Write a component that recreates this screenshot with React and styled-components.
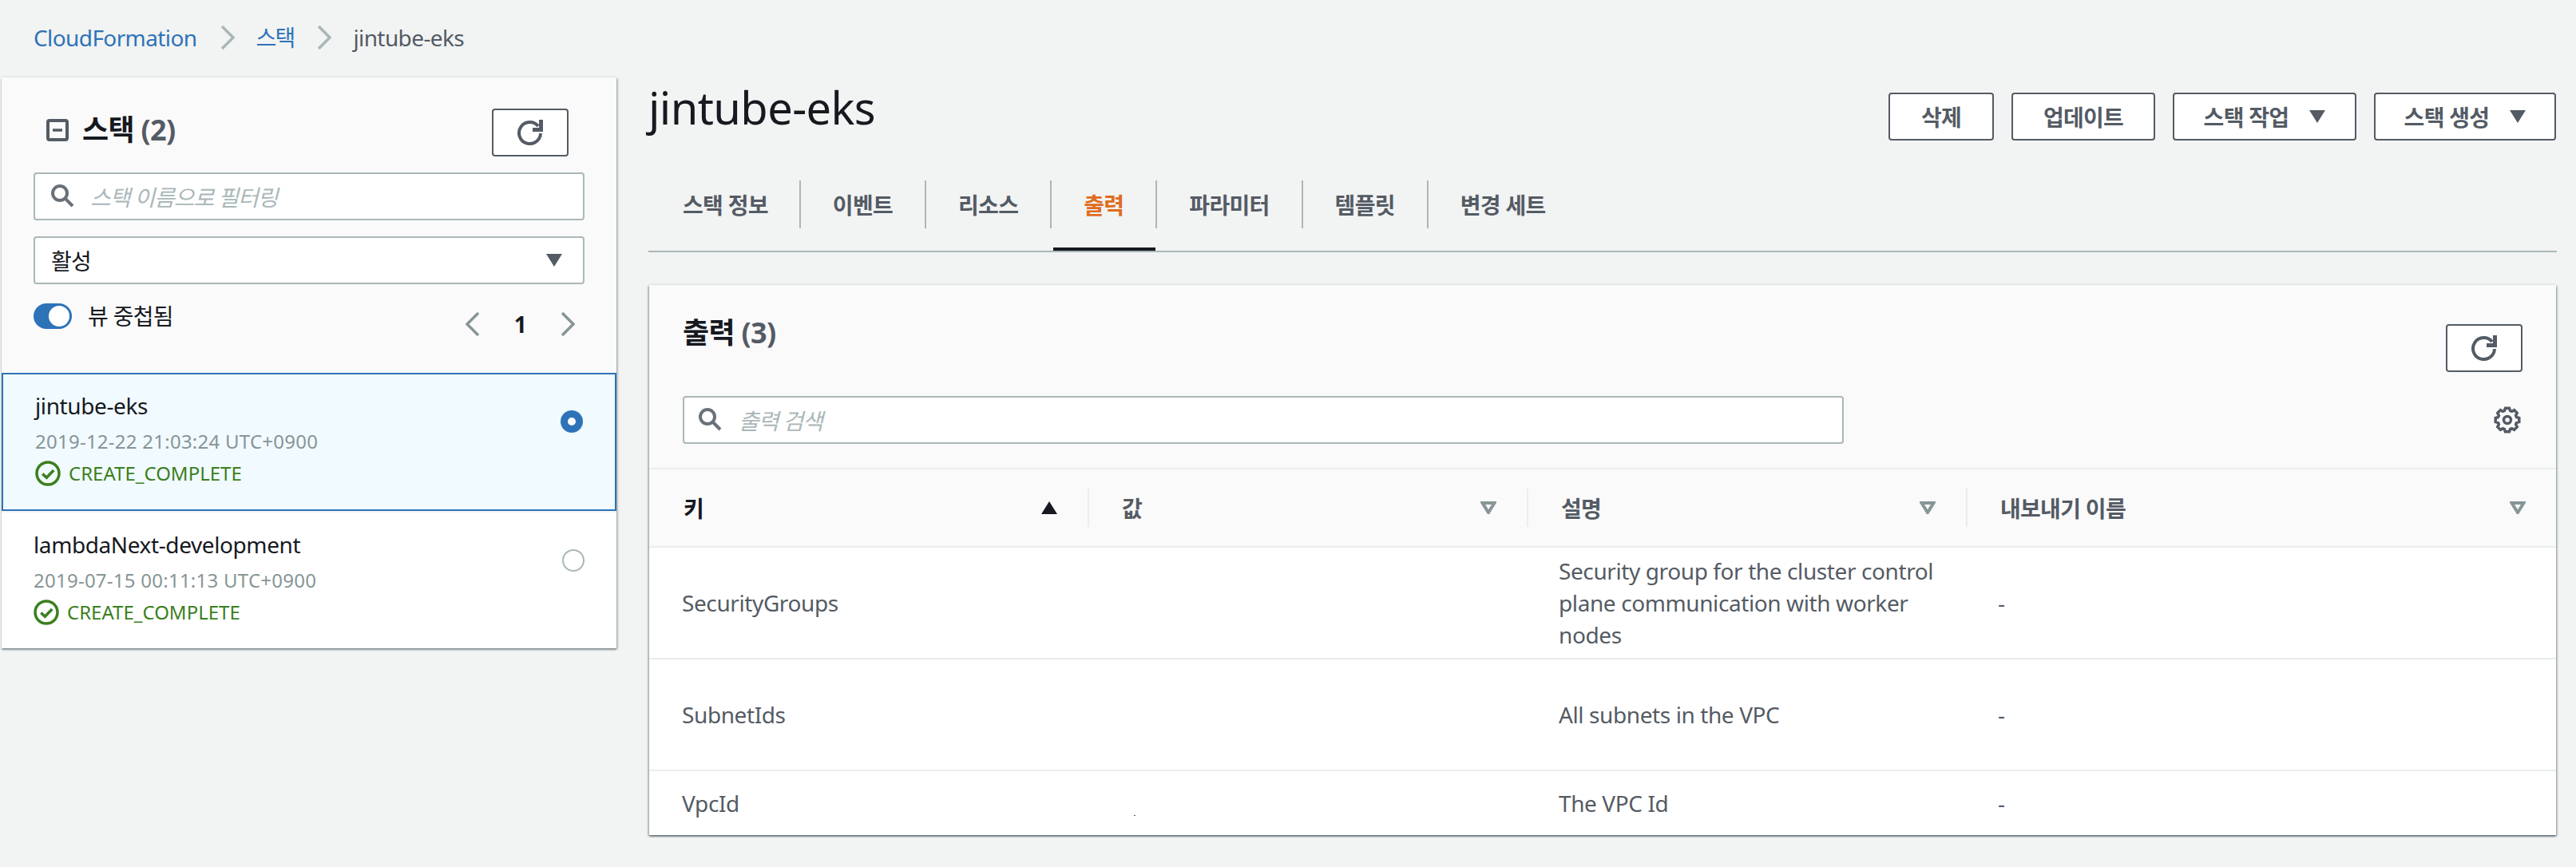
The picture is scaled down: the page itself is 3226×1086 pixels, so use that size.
import React from "react";
import styled, { createGlobalStyle } from "styled-components";

const GlobalStyle = createGlobalStyle`
  html, body {
    margin: 0;
    padding: 0;
    height: 1086px;
    overflow: hidden;
    background: #f2f3f3;
    color: #16191f;
    font-family: "Noto Sans", "Noto Sans CJK KR", sans-serif;
    font-size: 28px;
    letter-spacing: -0.7px;
  }
  * { box-sizing: border-box; }
`;

const Page = styled.div`
  width: 3226px;
  height: 1086px;
  overflow: hidden;
`;

const Breadcrumbs = styled.nav`
  height: 97px;
  padding: 27px 0 0 42px;
  display: flex;
  align-items: flex-start;
  line-height: 40px;
`;

const Crumb = styled.a`
  color: ${p => (p.$current ? "#545b64" : "#2e73b8")};
  letter-spacing: ${p => (p.$korean ? "-1.8px" : "-0.6px")};
`;

const CrumbSep = styled.svg`
  width: 18px;
  height: 30px;
  margin: 5px 27px 0 29px;
  fill: none;
  stroke: #aab7b8;
  stroke-width: 3.5;
`;

const Columns = styled.div`
  display: flex;
  align-items: flex-start;
  padding: 0 24px 0 2px;
`;

const SidePanel = styled.aside`
  width: 770px;
  flex: none;
  background: #fafafa;
  box-shadow: 0 2px 2px rgba(0, 28, 36, 0.4), 2px 1px 2px rgba(0, 28, 36, 0.2),
    0 -2px 1px rgba(0, 28, 36, 0.04);
`;

const SideHead = styled.div`
  padding: 39px 40px 0;
`;

const TitleRow = styled.div`
  display: flex;
  justify-content: space-between;
  align-items: flex-start;
  height: 80px;
  padding-right: 20px;
`;

const PanelTitle = styled.h2`
  display: flex;
  align-items: center;
  margin: 0;
  font-size: 36px;
  line-height: 54px;
  font-weight: 700;
  padding-left: 16px;
`;

const Count = styled.span`
  color: #545b64;
`;

const CollapseIcon = styled.svg`
  width: 28px;
  height: 28px;
  margin-right: 17px;
  fill: none;
  stroke: #545b64;
`;

const IconButton = styled.button`
  width: 96px;
  height: 60px;
  padding: 0;
  display: flex;
  align-items: center;
  justify-content: center;
  background: #fff;
  border: 2px solid #545b64;
  border-radius: 4px;
`;

const RefreshIcon = styled.svg`
  width: 34px;
  height: 32px;
  fill: none;
  stroke: #545b64;
`;

const SearchBox = styled.div`
  height: 60px;
  width: ${p => p.$width};
  display: flex;
  align-items: center;
  gap: ${p => p.$gap};
  padding-left: ${p => p.$inset};
  background: #fff;
  border: 2px solid #aab7b8;
  border-radius: 4px;
`;

const SearchIcon = styled.svg`
  width: 30px;
  height: 30px;
  flex: none;
  fill: none;
  stroke: #687078;
  stroke-width: 4;
`;

const Placeholder = styled.span`
  color: #aab7b8;
  font-style: italic;
  letter-spacing: -1.1px;
`;

const SelectBox = styled.div`
  height: 60px;
  margin-top: 20px;
  padding: 0 26px 0 20px;
  display: flex;
  align-items: center;
  justify-content: space-between;
  background: #fff;
  border: 2px solid #aab7b8;
  border-radius: 4px;
`;

const Caret = styled.svg`
  width: 20px;
  height: 16px;
  flex: none;
  fill: ${p => (p.$outline ? "none" : p.$color || "#545b64")};
  stroke: ${p => p.$color || "#545b64"};
  stroke-width: ${p => (p.$outline ? 4 : 0)};
`;

const ToolRow = styled.div`
  display: flex;
  justify-content: space-between;
  align-items: flex-start;
  height: 111px;
  padding-top: 24px;
`;

const ToggleWrap = styled.label`
  display: flex;
  align-items: center;
  gap: 20px;
  line-height: 32px;
`;

const ToggleTrack = styled.span`
  width: 48px;
  height: 32px;
  border-radius: 16px;
  background: #2e73b8;
  display: flex;
  align-items: center;
  justify-content: flex-end;
  padding-right: 3px;
`;

const ToggleKnob = styled.span`
  width: 26px;
  height: 26px;
  border-radius: 50%;
  background: #fff;
`;

const Pager = styled.div`
  display: flex;
  align-items: center;
  gap: 43px;
  margin: 11px 12px 0 0;
`;

const PagerChevron = styled.svg`
  width: 18px;
  height: 30px;
  fill: none;
  stroke: #879596;
  stroke-width: 3.5;
`;

const PageNumber = styled.span`
  font-weight: 700;
  line-height: 30px;
`;

const StackList = styled.div`
  background: #fff;
`;

const StackRow = styled.div`
  height: ${p => (p.$selected ? "173px" : "172px")};
  padding: ${p => (p.$selected ? "19px 40px 0" : "20px 40px 0")};
  display: flex;
  justify-content: space-between;
  background: ${p => (p.$selected ? "#f1faff" : "#fff")};
  border: ${p => (p.$selected ? "2px solid #2e73b8" : "none")};
  border-top: ${p => (p.$selected ? "2px solid #2e73b8" : "2px solid #f2f3f3")};
`;

const StackName = styled.div`
  line-height: 40px;
  letter-spacing: -0.4px;
`;

const StackDate = styled.div`
  margin-top: 7px;
  font-size: 24px;
  line-height: 36px;
  letter-spacing: 0.25px;
  color: #879596;
`;

const StatusLine = styled.div`
  margin-top: 6px;
  display: flex;
  align-items: center;
  gap: 10px;
  font-size: 24px;
  line-height: 32px;
  letter-spacing: 0;
  color: #3b7f1e;
`;

const StatusIcon = styled.svg`
  width: 32px;
  height: 32px;
  fill: none;
  stroke: #3b7f1e;
  stroke-width: 3.5;
`;

const Radio = styled.span`
  flex: none;
  width: 28px;
  height: 28px;
  margin-top: 26px;
  border-radius: 50%;
  background: #fff;
  border: ${p => (p.$checked ? "9px solid #2e73b8" : "2px solid #aab7b8")};
`;

const Main = styled.main`
  flex: 1;
  margin-left: 40px;
  min-width: 0;
`;

const MainHead = styled.header`
  display: flex;
  justify-content: space-between;
  height: 129px;
  padding: 19px 1px 0 0;
`;

const StackTitle = styled.h1`
  margin: -18px 0 0;
  font-size: 56px;
  line-height: 72px;
  font-weight: 400;
  letter-spacing: -0.6px;
`;

const Actions = styled.div`
  display: flex;
  gap: 22px;
`;

const ActionButton = styled.button`
  width: ${p => p.$width};
  height: 60px;
  padding: 0;
  display: flex;
  align-items: center;
  justify-content: center;
  gap: 26px;
  background: #fff;
  border: 2px solid #545b64;
  border-radius: 4px;
  color: #545b64;
  font-family: inherit;
  font-size: 28px;
  font-weight: 700;
  letter-spacing: inherit;
`;

const TabBar = styled.div`
  display: flex;
  align-items: center;
  height: 90px;
  border-bottom: 2px solid #aab7b8;
  padding-bottom: 28px;
`;

const Tab = styled.div`
  position: relative;
  height: 60px;
  padding: 0 40px;
  display: flex;
  align-items: center;
  border-right: ${p => (p.$last ? "none" : "2px solid #aab7b8")};
  font-weight: 700;
  color: ${p => (p.$active ? "#df6c1e" : "#545b64")};

  &:first-child {
    padding: 0 39px 0 43px;
  }

  ${p =>
    p.$active &&
    `
    &::after {
      content: "";
      position: absolute;
      left: 2px;
      right: 0;
      bottom: -28px;
      height: 4px;
      background: #16191f;
    }
  `}
`;

const Card = styled.section`
  margin: 41px 1px 0;
  height: 689px;
  overflow: hidden;
  background: #fafafa;
  box-shadow: 0 2px 2px rgba(0, 28, 36, 0.45), 2px 1px 2px rgba(0, 28, 36, 0.2),
    -2px 1px 2px rgba(0, 28, 36, 0.2), 0 -2px 1px rgba(0, 28, 36, 0.04);
`;

const CardHead = styled.div`
  height: 229px;
  padding: 33px 42px 0 42px;
  display: grid;
  grid-template-columns: 1fr 96px;
  grid-template-rows: 106px 60px;
`;

const CardTitle = styled.h2`
  margin: 0;
  font-size: 36px;
  line-height: 54px;
  font-weight: 700;
`;

const CardRefresh = styled(IconButton)`
  margin-top: 16px;
`;

const GearCell = styled.div`
  display: flex;
  align-items: center;
  justify-content: flex-end;
  padding-right: 2px;
`;

const GearIcon = styled.svg`
  width: 34px;
  height: 34px;
  fill: none;
  stroke: #545b64;
  stroke-width: 3.5;
`;

const HeaderRow = styled.div`
  display: grid;
  grid-template-columns: ${p => p.$cols};
  height: 100px;
  align-items: center;
  border-top: 2px solid #eaeded;
  border-bottom: 2px solid #eaeded;
`;

const HeaderCell = styled.div`
  height: 48px;
  padding: 0 38px 0 ${p => (p.$first ? "43px" : "41px")};
  display: flex;
  align-items: center;
  justify-content: space-between;
  border-left: ${p => (p.$first ? "none" : "2px solid #eaeded")};
  font-weight: 700;
  color: ${p => (p.$sorted ? "#16191f" : "#545b64")};
`;

const BodyRow = styled.div`
  display: grid;
  grid-template-columns: ${p => p.$cols};
  height: 140px;
  align-items: center;
  background: #fff;
  border-bottom: 2px solid #eaeded;
  color: #545b64;
  line-height: 40px;
  letter-spacing: -0.4px;

  &:last-child {
    height: 80px;
    border-bottom: none;
  }
`;

const BodyCell = styled.div`
  position: relative;
  padding: 0 ${p => (p.$wide ? "38px" : "20px")} 0 ${p => (p.$first ? "41px" : "40px")};
`;

const Speck = styled.span`
  position: absolute;
  left: 58px;
  top: 15px;
  width: 2px;
  height: 1px;
  background: #545b64;
`;

const COLUMNS = "549px 550px 550px 1fr";

// 8 teeth, traced round the centre of a 34 box
const gearPath = () => {
  const points = [];
  for (let i = 0; i < 8; i++) {
    const mid = (i * Math.PI) / 4;
    [
      [12, -0.3],
      [15, -0.17],
      [15, 0.17],
      [12, 0.3]
    ].forEach(([r, da]) => {
      const x = 17 + r * Math.sin(mid + da);
      const y = 17 - r * Math.cos(mid + da);
      points.push(`${x.toFixed(2)} ${y.toFixed(2)}`);
    });
  }
  return `M${points.join("L")}Z`;
};

const CollapseGlyph = () => (
  <CollapseIcon viewBox="0 0 28 28">
    <rect x="2" y="2" width="24" height="24" rx="2" strokeWidth="4" />
    <path d="M8 14h12" strokeWidth="3.5" />
  </CollapseIcon>
);

const Refresh = () => (
  <RefreshIcon viewBox="0 0 34 32">
    <path d="M27 8A13.5 13.5 0 1 0 30 17" strokeWidth="4" />
    <path d="M30.5 0v12.5H20" strokeWidth="5" />
  </RefreshIcon>
);

const Search = () => (
  <SearchIcon viewBox="0 0 30 30">
    <circle cx="11" cy="11" r="9" />
    <path d="M17.5 17.5L27 27" />
  </SearchIcon>
);

const CaretDown = ({ outline, color }) => (
  <Caret viewBox="0 0 20 16" $outline={outline} $color={color}>
    <path d={outline ? "M2.5 2h15L10 14z" : "M0 0h20L10 16z"} />
  </Caret>
);

const StackStatus = () => (
  <StatusLine>
    <StatusIcon viewBox="0 0 32 32">
      <circle cx="16" cy="16" r="14" />
      <path d="M9.3 16.5l5 4.8 9-9.3" />
    </StatusIcon>
    CREATE_COMPLETE
  </StatusLine>
);

const Chevron = ({ as: Icon, left }) => (
  <Icon viewBox="0 0 18 30">
    <path d={left ? "M16 1L2 15l14 14" : "M2 1l14 14L2 29"} />
  </Icon>
);

const stacks = [
  { name: "jintube-eks", date: "2019-12-22 21:03:24 UTC+0900", selected: true },
  { name: "lambdaNext-development", date: "2019-07-15 00:11:13 UTC+0900" }
];

const tabs = ["스택 정보", "이벤트", "리소스", "출력", "파라미터", "템플릿", "변경 세트"];

const outputs = [
  {
    key: "SecurityGroups",
    description: "Security group for the cluster control plane communication with worker nodes"
  },
  { key: "SubnetIds", description: "All subnets in the VPC" },
  { key: "VpcId", description: "The VPC Id", speck: true }
];

export default function App() {
  return (
    <Page>
      <GlobalStyle />
      <Breadcrumbs>
        <Crumb>CloudFormation</Crumb>
        <Chevron as={CrumbSep} />
        <Crumb $korean>스택</Crumb>
        <Chevron as={CrumbSep} />
        <Crumb $current>jintube-eks</Crumb>
      </Breadcrumbs>

      <Columns>
        <SidePanel>
          <SideHead>
            <TitleRow>
              <PanelTitle>
                <CollapseGlyph />
                <span>
                  스택 <Count>(2)</Count>
                </span>
              </PanelTitle>
              <IconButton>
                <Refresh />
              </IconButton>
            </TitleRow>
            <SearchBox $inset="20px" $gap="19px">
              <Search />
              <Placeholder>스택 이름으로 필터링</Placeholder>
            </SearchBox>
            <SelectBox>
              활성
              <CaretDown />
            </SelectBox>
            <ToolRow>
              <ToggleWrap>
                <ToggleTrack>
                  <ToggleKnob />
                </ToggleTrack>
                뷰 중첩됨
              </ToggleWrap>
              <Pager>
                <Chevron as={PagerChevron} left />
                <PageNumber>1</PageNumber>
                <Chevron as={PagerChevron} />
              </Pager>
            </ToolRow>
          </SideHead>
          <StackList>
            {stacks.map(stack => (
              <StackRow key={stack.name} $selected={stack.selected}>
                <div>
                  <StackName>{stack.name}</StackName>
                  <StackDate>{stack.date}</StackDate>
                  <StackStatus />
                </div>
                <Radio $checked={stack.selected} />
              </StackRow>
            ))}
          </StackList>
        </SidePanel>

        <Main>
          <MainHead>
            <StackTitle>jintube-eks</StackTitle>
            <Actions>
              <ActionButton $width="132px">삭제</ActionButton>
              <ActionButton $width="180px">업데이트</ActionButton>
              <ActionButton $width="230px">
                스택 작업
                <CaretDown />
              </ActionButton>
              <ActionButton $width="228px">
                스택 생성
                <CaretDown />
              </ActionButton>
            </Actions>
          </MainHead>

          <TabBar>
            {tabs.map((tab, i) => (
              <Tab key={tab} $active={tab === "출력"} $last={i === tabs.length - 1}>
                {tab}
              </Tab>
            ))}
          </TabBar>

          <Card>
            <CardHead>
              <CardTitle>
                출력 <Count>(3)</Count>
              </CardTitle>
              <CardRefresh>
                <Refresh />
              </CardRefresh>
              <SearchBox $width="1454px" $inset="18px" $gap="20px">
                <Search />
                <Placeholder>출력 검색</Placeholder>
              </SearchBox>
              <GearCell>
                <GearIcon viewBox="0 0 34 34">
                  <circle cx="17" cy="17" r="4.5" />
                  <path d={gearPath()} />
                </GearIcon>
              </GearCell>
            </CardHead>

            <HeaderRow $cols={COLUMNS}>
              <HeaderCell $first $sorted>
                키
                <Caret viewBox="0 0 20 16" $color="#16191f">
                  <path d="M10 0l10 16H0z" />
                </Caret>
              </HeaderCell>
              <HeaderCell>
                값
                <CaretDown outline color="#879596" />
              </HeaderCell>
              <HeaderCell>
                설명
                <CaretDown outline color="#879596" />
              </HeaderCell>
              <HeaderCell>
                내보내기 이름
                <CaretDown outline color="#879596" />
              </HeaderCell>
            </HeaderRow>

            {outputs.map(output => (
              <BodyRow key={output.key} $cols={COLUMNS}>
                <BodyCell $first>{output.key}</BodyCell>
                <BodyCell>{output.speck && <Speck />}</BodyCell>
                <BodyCell $wide>{output.description}</BodyCell>
                <BodyCell>-</BodyCell>
              </BodyRow>
            ))}
          </Card>
        </Main>
      </Columns>
    </Page>
  );
}
